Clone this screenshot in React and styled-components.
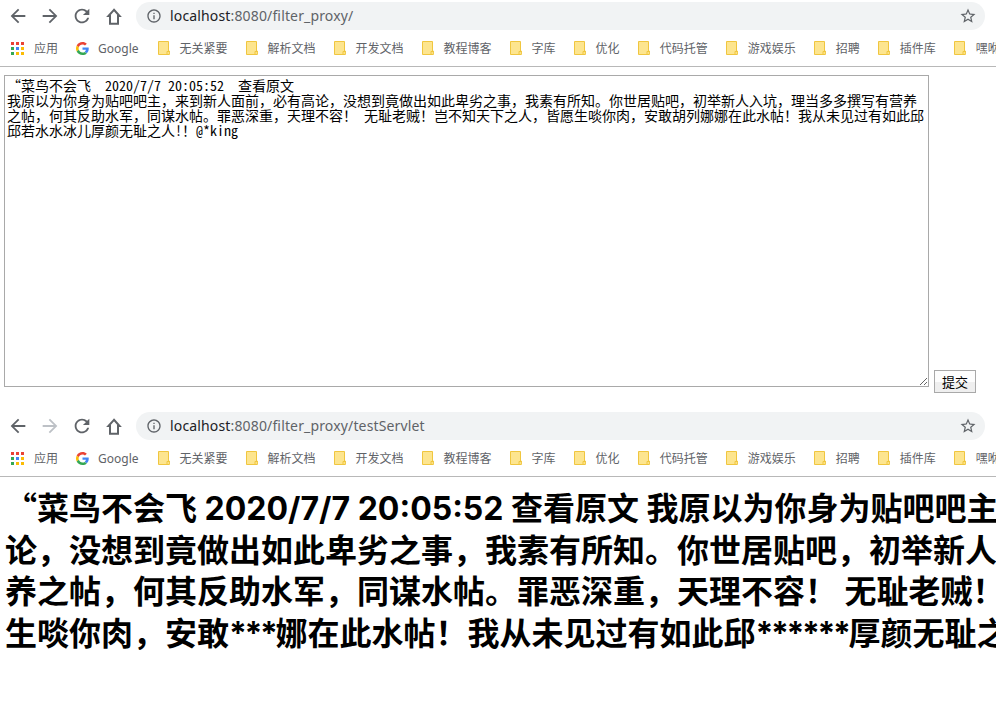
import styled, { createGlobalStyle } from 'styled-components';

const GlobalStyle = createGlobalStyle`
	html, body {
		margin: 0;
		padding: 0;
		background: #fff;
		overflow: hidden;
	}
`;

const BOOKMARKS = ['无关紧要', '解析文档', '开发文档', '教程博客', '字库', '优化', '代码托管', '游戏娱乐', '招聘', '插件库', '嘿咻'];
const APP_DOTS = ['#ea4335', '#ea4335', '#ea4335', '#34a853', '#4285f4', '#fbbc05', '#34a853', '#fbbc05', '#fbbc05'];

const POST = `“菜鸟不会飞  2020/7/7 20:05:52  查看原文
我原以为你身为贴吧吧主，来到新人面前，必有高论，没想到竟做出如此卑劣之事，我素有所知。你世居贴吧，初举新人入坑，理当多多撰写有营养之帖，何其反助水军，同谋水帖。罪恶深重，天理不容！ 无耻老贼！岂不知天下之人，皆愿生啖你肉，安敢胡列娜娜在此水帖！我从未见过有如此邱邱若水水冰儿厚颜无耻之人!！@*king`;

const RESULT_LINES = [
	'菜鸟不会飞 2020/7/7 20:05:52 查看原文 我原以为你身为贴吧吧主，来到新人面前，必有高',
	'论，没想到竟做出如此卑劣之事，我素有所知。你世居贴吧，初举新人入坑，理当多多撰写有营',
	'养之帖，何其反助水军，同谋水帖。罪恶深重，天理不容！ 无耻老贼！岂不知天下之人，皆愿',
	'生啖你肉，安敢***娜在此水帖！我从未见过有如此邱******厚颜无耻之人！',
];

const Icon = ({ d, size = 22, color = '#5f6368' }) => (
	<svg width={size} height={size} viewBox="0 0 24 24" fill={color}>
		<path d={d} />
	</svg>
);

const HomeIcon = () => (
	<svg width="16" height="17" viewBox="0 0 16 17" fill="none" stroke="#5f6368" strokeWidth="2">
		<path d="M8 1.800L2.400 8H4v7.800h8V8h1.600z" />
	</svg>
);

const GoogleLogo = () => (
	<svg width="13" height="13" viewBox="0 0 48 48">
		<path fill="#ea4335" d="M24 9.5c3.5 0 6.700 1.300 9.100 3.500l6.800-6.800C35.800 2.400 30.300 0 24 0 14.600 0 6.500 5.400 2.600 13.200l7.900 6.100C12.400 13.600 17.700 9.500 24 9.500z" />
		<path fill="#4285f4" d="M47 24.500c0-1.600-.1-3.100-.4-4.500H24v9h12.900c-.6 3-2.200 5.500-4.700 7.200l7.300 5.700C43.800 37.900 47 31.800 47 24.500z" />
		<path fill="#fbbc05" d="M10.500 28.700c-.5-1.500-.8-3-.8-4.700s.3-3.200.8-4.700l-7.900-6.100C.9 16.500 0 20.100 0 24s.9 7.500 2.600 10.800l7.900-6.100z" />
		<path fill="#34a853" d="M24 48c6.500 0 11.900-2.100 15.900-5.800l-7.300-5.700c-2.200 1.500-5 2.300-8.600 2.300-6.300 0-11.600-4.100-13.500-9.800l-7.900 6.100C6.500 42.600 14.600 48 24 48z" />
	</svg>
);

const FolderIcon = () => (
	<svg width="12" height="14" viewBox="0 0 12 14">
		<path d="M.5.5h10v9.500h.9v3.500H.5z" fill="#fde58f" stroke="#f0c63f" strokeWidth="1" />
		<path d="M9 13.500v-3h2.400" fill="none" stroke="#f0c63f" strokeWidth="1" />
	</svg>
);

const BrowserChrome = ({ path, forwardEnabled }) => (
	<div>
		<Toolbar>
			<NavButton><Icon d="M20 11H7.830l5.590-5.590L12 4l-8 8 8 8 1.410-1.410L7.830 13H20v-2z" /></NavButton>
			<NavButton>
				<Icon d="M12 4l-1.410 1.410L16.170 11H4v2h12.170l-5.580 5.590L12 20l8-8z" color={forwardEnabled ? '#5f6368' : '#bdc1c6'} />
			</NavButton>
			<NavButton><Icon d="M17.650 6.350C16.200 4.900 14.210 4 12 4c-4.420 0-7.990 3.580-7.990 8s3.570 8 7.990 8c3.730 0 6.840-2.550 7.730-6h-2.080c-.82 2.330-3.040 4-5.650 4-3.310 0-6-2.690-6-6s2.690-6 6-6c1.660 0 3.140.69 4.220 1.780L13 11h7V4l-2.350 2.350z" /></NavButton>
			<NavButton><HomeIcon /></NavButton>
			<AddressBar>
				<Icon size={16} d="M11 7h2v2h-2zm0 4h2v6h-2zm1-9C6.480 2 2 6.480 2 12s4.480 10 10 10 10-4.480 10-10S17.520 2 12 2zm0 18c-4.410 0-8-3.590-8-8s3.590-8 8-8 8 3.590 8 8-3.590 8-8 8z" />
				<Url><b>localhost</b>:8080{path}</Url>
				<StarSlot>
					<Icon size={18} d="M22 9.240l-7.190-.62L12 2 9.190 8.630 2 9.240l5.460 4.730L5.820 21 12 17.270 18.180 21l-1.630-7.030L22 9.240zM12 15.400l-3.760 2.270 1-4.280-3.320-2.880 4.380-.38L12 6.100l1.710 4.040 4.380.38-3.320 2.880 1 4.280L12 15.400z" />
				</StarSlot>
			</AddressBar>
		</Toolbar>
		<BookmarkBar>
			<AppsItem>
				<AppsGrid>
					{APP_DOTS.map((color, i) => <AppDot key={i} $color={color} />)}
				</AppsGrid>
				应用
			</AppsItem>
			<GoogleItem><GoogleLogo />Google</GoogleItem>
			{BOOKMARKS.map((name) => (
				<Bookmark key={name}><FolderIcon />{name}</Bookmark>
			))}
		</BookmarkBar>
	</div>
);

const App = () => (
	<Page>
		<GlobalStyle />
		<BrowserChrome path="/filter_proxy/" forwardEnabled />
		<FormRow>
			<PostInput readOnly defaultValue={POST} />
			<SubmitButton type="button">提交</SubmitButton>
		</FormRow>
		<BrowserChrome path="/filter_proxy/testServlet" />
		<Result>
			{RESULT_LINES.map((line, i) => (
				<ResultLine key={line}>
					{i === 0 && <OpenQuote>“</OpenQuote>}
					{line.split(/(\*+)/).map((part, j) => (
						part.startsWith('*') ? <Masked key={j}>{part}</Masked> : part
					))}
				</ResultLine>
			))}
		</Result>
	</Page>
);

const Page = styled.div`
	width: 996px;
	height: 705px;
	overflow: hidden;
	font-family: "Noto Sans", "Noto Sans CJK SC", sans-serif;
`;

const Toolbar = styled.div`
	display: flex;
	align-items: center;
	height: 33px;
	padding: 0 11px 1px 2px;
	box-sizing: border-box;
`;

const NavButton = styled.div`
	display: flex;
	align-items: center;
	justify-content: center;
	width: 32px;
	height: 32px;
	flex: none;
`;

const AddressBar = styled.div`
	display: flex;
	align-items: center;
	flex: 1;
	height: 28px;
	margin-left: 6px;
	padding: 0 8px 0 10px;
	gap: 8px;
	background: #f1f3f4;
	border-radius: 14px;
`;

const Url = styled.span`
	flex: 1;
	padding-bottom: 2px;
	font-size: 14px;
	letter-spacing: 0.15px;
	color: #5f6368;
	b {
		font-weight: 400;
		color: #202124;
	}
`;

const StarSlot = styled.span`
	display: flex;
`;

const BookmarkBar = styled.div`
	display: flex;
	align-items: center;
	height: 34px;
	padding: 0 0 3px 11px;
	box-sizing: border-box;
	border-bottom: 1px solid #b8b8b8;
	font-size: 12px;
	color: #5f6368;
	white-space: nowrap;
	overflow: hidden;
`;

const BarItem = styled.div`
	display: flex;
	align-items: center;
	flex: none;
`;

const AppsItem = styled(BarItem)`
	gap: 10px;
	margin-right: 18px;
`;

const GoogleItem = styled(BarItem)`
	gap: 9px;
	margin-right: 19px;
`;

const Bookmark = styled(BarItem)`
	gap: 10px;
	margin-right: 18px;
`;

const AppsGrid = styled.div`
	display: grid;
	grid-template-columns: repeat(3, 3px);
	grid-auto-rows: 3px;
	gap: 2px;
`;

const AppDot = styled.i`
	display: block;
	background: ${(p) => p.$color};
`;

const FormRow = styled.div`
	display: flex;
	align-items: flex-end;
	gap: 5px;
	height: 343px;
	padding: 8px 0 0 4px;
	box-sizing: border-box;
`;

const PostInput = styled.textarea`
	width: 925px;
	height: 312px;
	margin: 0 0 23px;
	padding: 2px;
	box-sizing: border-box;
	border: 1px solid #a9a9a9;
	outline: none;
	font-family: "Noto Sans Mono CJK SC", "Noto Sans CJK SC", "Liberation Mono", monospace;
	font-size: 14px;
	line-height: 15px;
	color: #000;
`;

const SubmitButton = styled.button`
	width: 42px;
	height: 23px;
	margin-bottom: 17px;
	padding: 0;
	background: linear-gradient(#fdfdfd 50%, #efefef 50%);
	border: 1px solid #a9a9a9;
	border-radius: 0;
	font-family: "Noto Sans CJK SC", sans-serif;
	font-size: 13px;
	color: #000;
`;

const Result = styled.div`
	padding: 9px 0 0 5px;
`;

const ResultLine = styled.div`
	font-family: Inter, "Noto Sans CJK SC", sans-serif;
	font-size: 32px;
	font-weight: 700;
	line-height: 41.7px;
	color: #000;
	white-space: nowrap;
`;

const OpenQuote = styled.span`
	font-family: "Noto Sans CJK SC", sans-serif;
`;

const Masked = styled.span`
	letter-spacing: -2.4px;
`;

export default App;
